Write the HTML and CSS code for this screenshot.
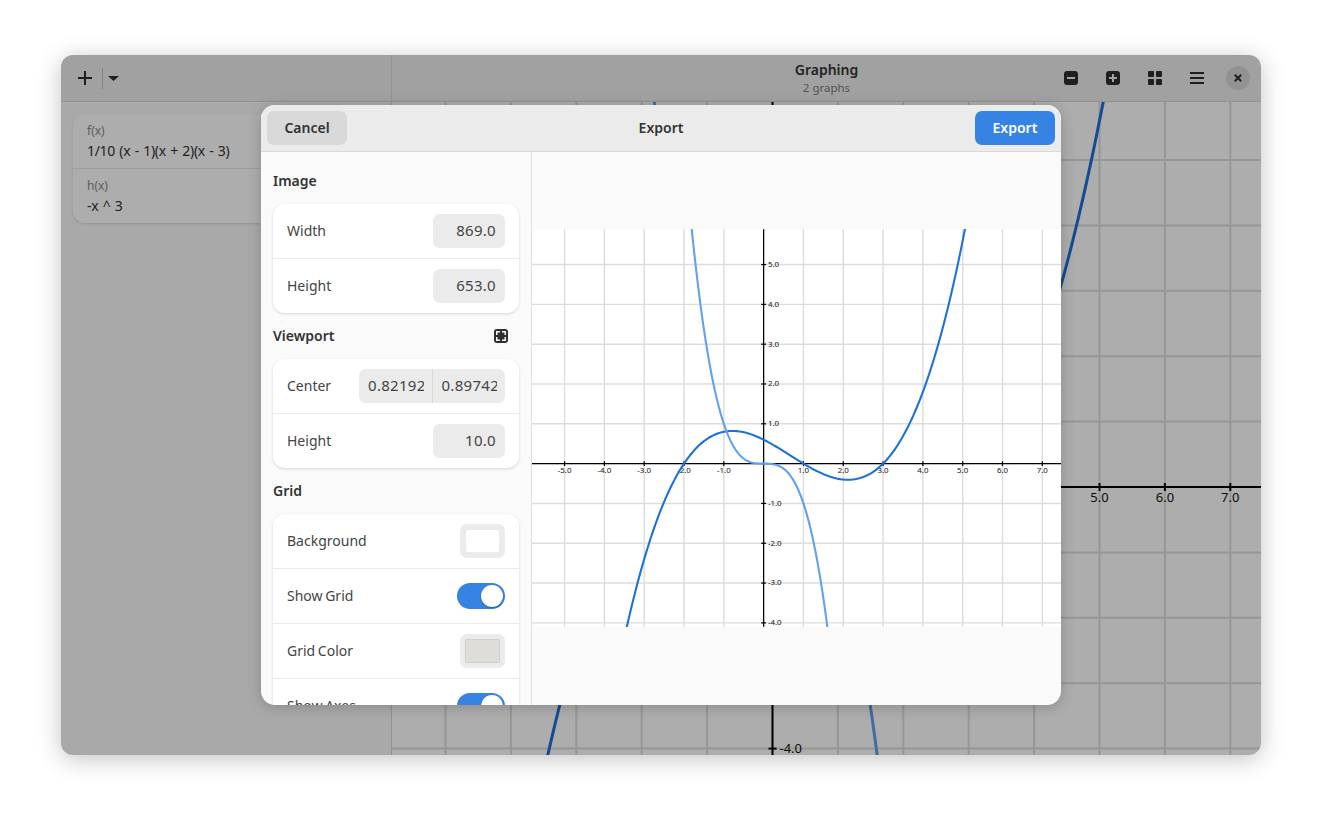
FILE: index.html
```html
<!DOCTYPE html>
<html lang="en">
<head>
    <meta charset="UTF-8">
    <title>Graphing</title>
    <link rel="stylesheet" href="styles.css">
</head>
<body>
    <div class="window">
        <div class="side-col">
            <header class="headerbar side-header">
                <svg class="icon" viewBox="0 0 16 16"><path d="M7 1h2v6h6v2H9v6H7V9H1V7h6z"/></svg>
                <span class="header-sep"></span>
                <svg class="caret" viewBox="0 0 11 5"><path d="M0 0h11L5.5 5z"/></svg>
            </header>
            <div class="side-body">
                <div class="card">
                    <div class="fn-row">
                        <span class="fn-name">f(x)</span>
                        <span class="fn-expr">1/10 (x - 1)(x + 2)(x - 3)</span>
                    </div>
                    <div class="fn-row">
                        <span class="fn-name">h(x)</span>
                        <span class="fn-expr">-x ^ 3</span>
                    </div>
                </div>
            </div>
        </div>
        <div class="main-col">
            <header class="headerbar main-header">
                <div></div>
                <div class="title-block">
                    <div class="app-title">Graphing</div>
                    <div class="app-subtitle">2 graphs</div>
                </div>
                <div class="header-actions">
                    <button class="icon-btn"><svg class="icon" viewBox="0 0 16 16"><path fill-rule="evenodd" d="M4 1h8a3 3 0 0 1 3 3v8a3 3 0 0 1-3 3H4a3 3 0 0 1-3-3V4a3 3 0 0 1 3-3zm0 6v2h8V7z"/></svg></button>
                    <button class="icon-btn"><svg class="icon" viewBox="0 0 16 16"><path fill-rule="evenodd" d="M4 1h8a3 3 0 0 1 3 3v8a3 3 0 0 1-3 3H4a3 3 0 0 1-3-3V4a3 3 0 0 1 3-3zm3 3v3H4v2h3v3h2V9h3V7H9V4z"/></svg></button>
                    <button class="icon-btn"><svg class="icon" viewBox="0 0 16 16"><rect x="1" y="1" width="6" height="6" rx="1"/><rect x="9" y="1" width="6" height="6" rx="1"/><rect x="1" y="9" width="6" height="6" rx="1"/><rect x="9" y="9" width="6" height="6" rx="1"/></svg></button>
                    <button class="icon-btn"><svg class="icon" viewBox="0 0 16 16"><path d="M1 2h14v2H1zM1 7h14v2H1zM1 12h14v2H1z"/></svg></button>
                    <button class="close-btn"><svg class="close-icon" viewBox="0 0 10 10"><path d="M1 1l8 8M9 1l-8 8"/></svg></button>
                </div>
            </header>
            <svg class="canvas" id="main-graph" viewBox="0 0 869 653"></svg>
        </div>

        <div class="dim">
            <div class="dialog">
                <header class="dialog-header">
                    <button class="btn">Cancel</button>
                    <div class="dialog-title">Export</div>
                    <button class="btn btn-primary">Export</button>
                </header>
                <div class="dialog-body">
                    <div class="settings">
                        <section class="group">
                            <div class="group-title">Image</div>
                            <div class="list">
                                <div class="row"><span class="row-label">Width</span><span class="entry">869.0</span></div>
                                <div class="row"><span class="row-label">Height</span><span class="entry">653.0</span></div>
                            </div>
                        </section>
                        <section class="group">
                            <div class="group-title">
                                Viewport
                                <svg class="icon" viewBox="0 0 16 16"><path fill-rule="evenodd" d="M4 1h8a3 3 0 0 1 3 3v8a3 3 0 0 1-3 3H4a3 3 0 0 1-3-3V4a3 3 0 0 1 3-3zM3 3h4v1.500H4.500V7H3zM13 3v4h-1.500V4.500H9V3zM3 13V9h1.500v2.500H7V13zM13 13H9v-1.500h2.500V9H13z"/></svg>
                            </div>
                            <div class="list">
                                <div class="row">
                                    <span class="row-label">Center</span>
                                    <span class="entry-pair">
                                        <span class="entry-part">0.821927</span>
                                        <span class="entry-sep"></span>
                                        <span class="entry-part">0.897425</span>
                                    </span>
                                </div>
                                <div class="row"><span class="row-label">Height</span><span class="entry">10.0</span></div>
                            </div>
                        </section>
                        <section class="group">
                            <div class="group-title">Grid</div>
                            <div class="list">
                                <div class="row"><span class="row-label">Background</span><span class="swatch"><span class="swatch-fill white"></span></span></div>
                                <div class="row"><span class="row-label">Show Grid</span><span class="switch"></span></div>
                                <div class="row"><span class="row-label">Grid Color</span><span class="swatch"><span class="swatch-fill grey"></span></span></div>
                                <div class="row"><span class="row-label">Show Axes</span><span class="switch"></span></div>
                            </div>
                        </section>
                    </div>
                    <div class="preview">
                        <svg class="preview-image" id="preview-graph" viewBox="0 0 869 653"></svg>
                    </div>
                </div>
            </div>
        </div>
    </div>

    <script src="graph.js"></script>
</body>
</html>
```

FILE: styles.css
```css
* {
    box-sizing: border-box;
}

body {
    margin: 0;
    padding: 55px 61px;
    background-color: #fff;
    font-family: "Noto Sans", sans-serif;
    font-size: 14px;
    color: #333;
}

button {
    font: inherit;
    border: none;
    padding: 0;
}

.window {
    position: relative;
    display: flex;
    width: 1200px;
    height: 700px;
    border-radius: 12px;
    overflow: hidden;
    background-color: #fafafa;
    box-shadow: 0 4px 24px rgba(0, 0, 0, 0.24);
}

/* main window, sits under the dim layer */
.side-col {
    width: 331px;
    border-right: 1px solid #d8d8d8;
}

.main-col {
    width: 869px;
    background-color: #fff;
}

.headerbar {
    height: 47px;
    background-color: #eeeeee;
    border-bottom: 1px solid #d8d8d8;
}

.side-header {
    display: flex;
    align-items: center;
    padding-left: 16px;
}

.icon {
    display: block;
    width: 16px;
    height: 16px;
    fill: #2e2e2e;
}

.header-sep {
    width: 1px;
    height: 21px;
    margin: 0 5px 0 9px;
    background-color: #c4c4c4;
}

.caret {
    width: 11px;
    height: 5px;
    fill: #2e2e2e;
}

.side-body {
    padding: 12px;
}

.card {
    background-color: #fff;
    border-radius: 12px;
    box-shadow: 0 1px 3px rgba(0, 0, 0, 0.15);
}

.fn-row {
    display: flex;
    flex-direction: column;
    height: 54px;
    padding: 8px 14px 0;
}

.fn-row + .fn-row {
    height: 55px;
    border-top: 1px solid #e6e6e6;
}

.fn-name {
    font-size: 12px;
    line-height: 17px;
    color: #8a8a8a;
}

.fn-expr {
    margin-top: 2px;
    line-height: 20px;
    letter-spacing: -0.3px;
    word-spacing: 1px;
}

.main-header {
    display: grid;
    grid-template-columns: 1fr auto 1fr;
    align-items: center;
}

.title-block {
    padding-bottom: 2px;
    text-align: center;
}

.app-title {
    font-weight: 600;
    line-height: 20px;
}

.app-subtitle {
    font-size: 11.5px;
    line-height: 15px;
    color: #7c7c7c;
}

.header-actions {
    display: flex;
    justify-content: flex-end;
    align-items: center;
    gap: 8px;
    padding-right: 11px;
}

.icon-btn {
    display: flex;
    justify-content: center;
    align-items: center;
    width: 34px;
    height: 34px;
    background: none;
}

.close-btn {
    display: flex;
    justify-content: center;
    align-items: center;
    width: 24px;
    height: 24px;
    margin-left: 4px;
    border-radius: 50%;
    background-color: #d8d8d8;
}

.close-icon {
    width: 8px;
    height: 8px;
    fill: none;
    stroke: #2e2e2e;
    stroke-width: 2.5;
}

.canvas {
    display: block;
    width: 869px;
    height: 653px;
}

/* graph drawing, filled in by graph.js */
.grid-line {
    stroke: #deddda;
    stroke-width: 2;
}

.axis-line {
    stroke: #000;
    stroke-width: 2;
}

.curve {
    fill: none;
    stroke-width: 3;
}

.curve-f {
    stroke: #1c71d8;
}

.curve-h {
    stroke: #62a0ea;
}

.tick-label {
    font-size: 13px;
    fill: #111;
}

/* dim layer and export dialog */
.dim {
    position: absolute;
    top: 0;
    right: 0;
    bottom: 0;
    left: 0;
    display: flex;
    justify-content: center;
    align-items: center;
    background-color: rgba(0, 0, 0, 0.32);
}

.dialog {
    display: flex;
    flex-direction: column;
    width: 800px;
    height: 600px;
    border-radius: 14px;
    overflow: hidden;
    background-color: #fafafa;
    box-shadow: 0 2px 14px rgba(0, 0, 0, 0.2);
}

.dialog-header {
    display: flex;
    flex: none;
    justify-content: space-between;
    align-items: center;
    height: 47px;
    padding: 0 6px;
    background-color: #ebebeb;
    border-bottom: 1px solid #d8d8d8;
}

.dialog-title {
    padding-bottom: 2px;
    font-weight: 600;
}

.btn {
    width: 80px;
    height: 34px;
    padding-bottom: 2px;
    border-radius: 7px;
    background-color: #d9d9d9;
    color: #333;
    font-weight: 600;
}

.btn-primary {
    background-color: #3584e4;
    color: #fff;
}

.dialog-body {
    display: flex;
    flex: 1;
    min-height: 0;
}

.settings {
    flex: none;
    width: 271px;
    padding: 19px 12px 0;
    overflow: hidden;
    border-right: 1px solid #dedede;
}

.group {
    margin-bottom: 13px;
}

.group-title {
    display: flex;
    justify-content: space-between;
    align-items: center;
    height: 20px;
    margin-bottom: 13px;
    padding-right: 10px;
    padding-bottom: 2px;
    font-weight: 600;
}

.group-title .icon {
    margin-top: 2px;
}

.list {
    background-color: #fff;
    border-radius: 12px;
    box-shadow: 0 1px 3px rgba(0, 0, 0, 0.15);
}

.row {
    display: flex;
    justify-content: space-between;
    align-items: center;
    height: 54px;
    padding: 0 14px;
    color: #444;
}

.row + .row {
    height: 55px;
    border-top: 1px solid #ebebeb;
}

.row-label {
    margin-bottom: 2px;
    word-spacing: -1px;
}

.entry {
    width: 72px;
    height: 34px;
    padding-right: 9px;
    border-radius: 7px;
    background-color: #ebebeb;
    font-size: 15px;
    letter-spacing: 0.3px;
    line-height: 32px;
    text-align: right;
}

.entry-pair {
    display: flex;
    width: 146px;
    height: 34px;
    padding: 0 8px 0 9px;
    border-radius: 7px;
    background-color: #ebebeb;
    font-size: 15px;
    letter-spacing: 0.3px;
}

.entry-part {
    width: 56px;
    overflow: hidden;
    white-space: nowrap;
    line-height: 32px;
}

.entry-sep {
    width: 1px;
    margin: 0 9px 0 8px;
    background-color: #d8d8d8;
}

.swatch {
    display: flex;
    width: 45px;
    height: 34px;
    padding: 6px;
    border-radius: 7px;
    background-color: #ebebeb;
}

.swatch-fill {
    flex: 1;
    border-radius: 2px;
}

.white {
    background-color: #fff;
}

.grey {
    margin: -1px;
    background-color: #deddda;
    border: 1px solid #cfcfcc;
}

.switch {
    position: relative;
    width: 48px;
    height: 26px;
    border-radius: 13px;
    background-color: #3584e4;
}

.switch::after {
    content: "";
    position: absolute;
    top: 2px;
    right: 2px;
    width: 22px;
    height: 22px;
    border-radius: 50%;
    background-color: #fff;
    box-shadow: 0 1px 2px rgba(0, 0, 0, 0.3);
}

.preview {
    display: flex;
    flex: 1;
    align-items: center;
    padding-bottom: 2px;
}

.preview-image {
    display: block;
    width: 529px;
    height: 398px;
    background-color: #fff;
}

.preview-image .grid-line {
    stroke-width: 2.4;
}

.preview-image .curve {
    stroke-width: 3.4;
}
```

FILE: graph.js
```js
// Both graphs show the same 869x653 view, the preview is only scaled down
const ORIGIN_X = 380.5;
const ORIGIN_Y = 385;
const UNIT = 65.4;

const functions = [
    { name: 'curve-f', fn: x => 0.1 * (x - 1) * (x + 2) * (x - 3) },
    { name: 'curve-h', fn: x => -x * x * x },
];

function toX(value) {
    return ORIGIN_X + value * UNIT;
}

function toY(value) {
    return ORIGIN_Y - value * UNIT;
}

function line(x1, y1, x2, y2, cls) {
    return `<line x1="${x1}" y1="${y1}" x2="${x2}" y2="${y2}" class="${cls}"/>`;
}

function drawGraph(id) {
    let out = '';

    // Grid
    for (let i = -5; i <= 7; i++) {
        out += line(toX(i), 0, toX(i), 653, 'grid-line');
    }
    for (let i = -4; i <= 5; i++) {
        out += line(0, toY(i), 869, toY(i), 'grid-line');
    }

    // Axes and their ticks
    out += line(0, ORIGIN_Y, 869, ORIGIN_Y, 'axis-line');
    out += line(ORIGIN_X, 0, ORIGIN_X, 653, 'axis-line');
    for (let i = -5; i <= 7; i++) {
        if (i === 0) continue;
        out += line(toX(i), ORIGIN_Y - 4, toX(i), ORIGIN_Y + 4, 'axis-line');
        out += `<text x="${toX(i)}" y="${ORIGIN_Y + 15}" text-anchor="middle" class="tick-label">${i.toFixed(1)}</text>`;
    }
    for (let i = -4; i <= 5; i++) {
        if (i === 0) continue;
        out += line(ORIGIN_X - 4, toY(i), ORIGIN_X + 4, toY(i), 'axis-line');
        out += `<text x="${ORIGIN_X + 7}" y="${toY(i) + 4}" class="tick-label">${i.toFixed(1)}</text>`;
    }

    // Curves
    functions.forEach(item => {
        const points = [];
        for (let px = 0; px <= 869; px += 2) {
            const y = toY(item.fn((px - ORIGIN_X) / UNIT));
            if (y > -40 && y < 693) points.push(`${px},${y.toFixed(1)}`);
        }
        out += `<polyline points="${points.join(' ')}" class="curve ${item.name}"/>`;
    });

    document.getElementById(id).innerHTML = out;
}

drawGraph('main-graph');
drawGraph('preview-graph');
```
